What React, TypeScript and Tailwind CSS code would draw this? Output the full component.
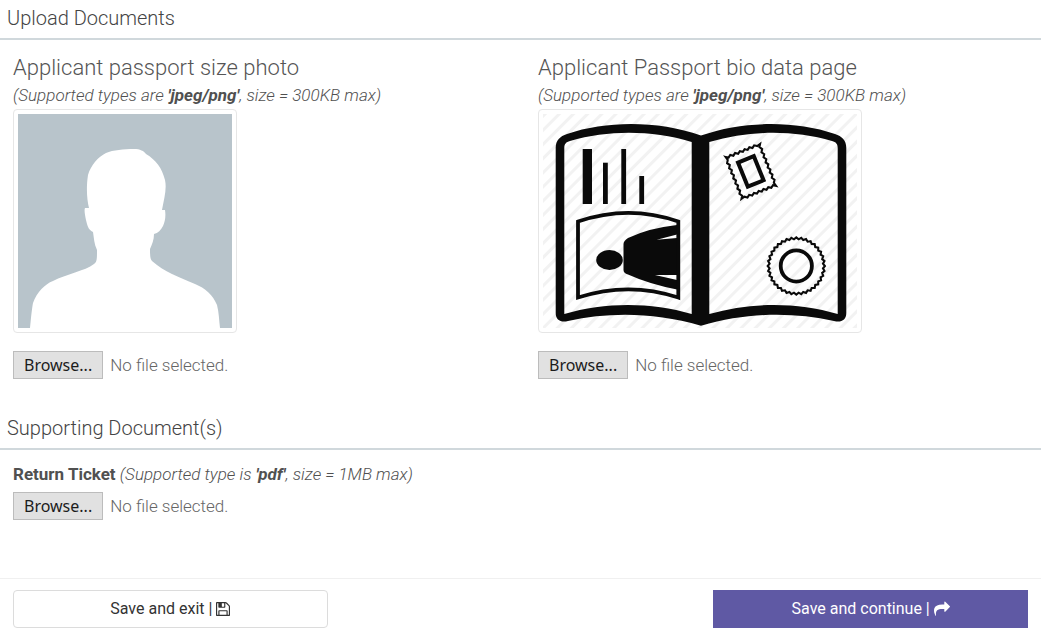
import React, { useRef, useState } from 'react';

type Point = [number, number];

// Perforated edge: walks between two points, swinging from side to side
const perforate = (from: Point, to: Point, teeth: number, depth: number): Point[] => {
  const dx = to[0] - from[0];
  const dy = to[1] - from[1];
  const len = Math.hypot(dx, dy);
  return Array.from({ length: teeth * 2 }, (_, i) => {
    const t = i / (teeth * 2);
    const side = i % 2 ? -depth : depth;
    return [from[0] + dx * t + (dy / len) * side, from[1] + dy * t - (dx / len) * side];
  });
};

const toPoints = (points: Point[]) => points.map(p => p.map(n => n.toFixed(2)).join(',')).join(' ');

const stampEdge = toPoints([
  ...perforate([-18, -22], [18, -22], 7, 0.9),
  ...perforate([18, -22], [18, 22], 8, 0.9),
  ...perforate([18, 22], [-18, 22], 7, 0.9),
  ...perforate([-18, 22], [-18, -22], 8, 0.9),
]);

const sealEdge = toPoints(
  Array.from({ length: 72 }, (_, i): Point => {
    const r = i % 2 ? 26.8 : 28.6;
    const a = (i / 72) * Math.PI * 2;
    return [Math.cos(a) * r, Math.sin(a) * r];
  })
);

const AvatarPlaceholder = () => (
  <svg viewBox="0 0 214 214" className="block w-[214px] h-[214px] bg-[#b8c4cb]" role="img" aria-label="Photo preview">
    <path
      fill="#fff"
      d="M12 214 C13 203 14 194 15 189 C19 178 27 170 35 167 C48 160 67 157 76 150 C79 148 79 145 79 136 C76 130 76 124 75 118 C70 116 69 110 68 106 C67 101 66 96 67 94 H71 C69 86 68 74 70 61 C73 51 80 43 88 39 C95 36 106 35 116 35 C122 35 126 37 128 40 C138 46 144 54 147 66 C149 75 146 85 144 96 H147 C148 102 147 108 145 112 C143 116 140 119 136 120 C136 126 134 130 132 135 C132 140 132 145 134 147 C146 158 161 163 177 170 C187 174 195 181 199 191 C201 199 201 206 202 214 Z"
    />
  </svg>
);

const PassportPlaceholder = () => (
  <svg viewBox="0 0 314 214" className="block w-[314px] h-[214px]" role="img" aria-label="Passport preview">
    <defs>
      <pattern id="stripes" width="10" height="10" patternUnits="userSpaceOnUse" patternTransform="rotate(45)">
        <rect width="3" height="10" fill="#f2f2f2" />
      </pattern>
    </defs>
    <rect width="314" height="214" fill="url(#stripes)" />
    <path
      fill="#0a0a0a"
      fillRule="evenodd"
      d="M12.7 34 C12.7 26 17 22.5 24 20 C64 6.5 115 6.5 158 21.5 C201 6.5 252 6.5 292 20 C299 22.5 303.3 26 303.3 34 V199 C303.3 206 298 209 291 207 C250 198 205 198 158 211.7 C111 198 66 198 25 207 C18 209 12.7 206 12.7 199 Z M21.3 34 C21.3 30 23 28 27 27 C66 16 108 16 148.7 28 V200 C108 188 62 188 21.3 200 Z M294.7 34 C294.7 30 293 28 289 27 C250 16 208 16 166.3 28 V200 C208 188 254 188 294.7 200 Z"
    />
    <g fill="#0a0a0a">
      <rect x="39.7" y="35" width="9.3" height="55" />
      <rect x="60" y="48.7" width="4.8" height="41.3" />
      <rect x="78.3" y="35" width="4.8" height="55" />
      <rect x="96.3" y="62" width="4.8" height="28" />
      <ellipse cx="66.5" cy="146" rx="13.3" ry="10" />
      <path d="M80.5 130 Q80.5 127 85 124 Q106 114 134 111 V120.5 L113.7 125.7 L134 124 V161 H112 L134 166 V175.5 Q106 170 85 160.5 Q80.5 159 80.5 156 Z" />
    </g>
    <path d="M35 107.5 C68 96.2 103 96.2 135.3 107.5 V183.5 C103 172.8 68 172.8 35 183.5 Z" fill="none" stroke="#0a0a0a" strokeWidth="3.8" />
    <g transform="translate(207.8 57.4) rotate(-22)" fill="none" stroke="#0a0a0a">
      <polygon points={stampEdge} strokeWidth="2.1" />
      <rect x="-8.5" y="-13" width="17" height="26" strokeWidth="4" />
    </g>
    <g transform="translate(253.3 152)" fill="none" stroke="#0a0a0a">
      <polygon points={sealEdge} strokeWidth="2.1" />
      <circle r="15.6" strokeWidth="3.8" />
    </g>
  </svg>
);

const SaveIcon = () => (
  <svg viewBox="128 128 1536 1536" className="w-3.5 h-3.5" fill="currentColor" aria-hidden="true">
    <path d="M512 1536h768v-384h-768v384zm896 0h128v-896q0-14-10-38.5t-20-34.5l-281-281q-10-10-34-20t-39-10v416q0 40-28 68t-68 28h-576q-40 0-68-28t-28-68v-416h-128v1280h128v-416q0-40 28-68t68-28h832q40 0 68 28t28 68v416zm-384-928v-320q0-13-9.5-22.5t-22.5-9.5h-192q-13 0-22.5 9.5t-9.5 22.5v320q0 13 9.5 22.5t22.5 9.5h192q13 0 22.5-9.5t9.5-22.5zm640 32v928q0 40-28 68t-68 28h-1344q-40 0-68-28t-28-68v-1344q0-40 28-68t68-28h928q40 0 88 20t76 48l280 280q28 28 48 76t20 88z" />
  </svg>
);

const ForwardIcon = () => (
  <svg viewBox="0 0 1792 1792" className="w-4 h-4" fill="currentColor" aria-hidden="true">
    <path d="M1792 640q0 26-19 45l-512 512q-19 19-45 19t-45-19-19-45v-256h-224q-98 0-175.5 6t-154 21.5-133 42.5-105.5 69.5-80 101-48.5 138.5-17.5 181q0 55 5 123 0 6 2.5 23.5t2.5 26.5q0 15-8.5 25t-23.5 10q-16 0-28-17-7-9-13-22t-13.5-30-10.5-24q-127-285-127-451 0-199 53-333 162-403 875-403h224v-256q0-26 19-45t45-19 45 19l512 512q19 19 19 45z" />
  </svg>
);

interface FilePickerProps {
  id: string;
  accept: string;
}

const FilePicker: React.FC<FilePickerProps> = ({ id, accept }) => {
  const inputRef = useRef<HTMLInputElement>(null);
  const [fileName, setFileName] = useState('');

  return (
    <div className="flex items-center gap-[7px]">
      <input
        ref={inputRef}
        id={id}
        type="file"
        accept={accept}
        className="hidden"
        onChange={(e) => setFileName(e.target.files?.[0]?.name ?? '')}
      />
      <button
        type="button"
        onClick={() => inputRef.current?.click()}
        className="h-7 px-2.5 border border-[#bcbcbc] bg-[#e1e1e1] font-['Noto_Sans',sans-serif] text-base leading-6 text-[#1c1c1c]"
      >
        Browse...
      </button>
      <span className="text-[17px] leading-7 font-light text-[#666]">{fileName || 'No file selected.'}</span>
    </div>
  );
};

const SectionTitle: React.FC<{ children: React.ReactNode }> = ({ children }) => (
  <h2 className="px-[7px] pt-1 pb-1.5 border-b-2 border-[#d0d8dc] text-xl leading-7 font-light text-[#444]">{children}</h2>
);

interface ImageUploadProps {
  id: string;
  title: string;
  children: React.ReactNode;
}

const ImageUpload: React.FC<ImageUploadProps> = ({ id, title, children }) => (
  <div className="flex flex-col items-start">
    <label htmlFor={id} className="text-[22px] leading-7 font-light text-[#555]">{title}</label>
    <p className="text-[17px] leading-[27px] font-light italic">
      (Supported types are <b className="font-bold">'jpeg/png'</b>, size = 300KB max)
    </p>
    <div className="p-1 mb-[18px] border border-[#e6e6e6] rounded-sm">{children}</div>
    <FilePicker id={id} accept="image/jpeg,image/png" />
  </div>
);

export default function App() {
  return (
    <div className="min-h-screen bg-white font-['Roboto',sans-serif] text-[#505050]">
      <form className="mr-[22px]" onSubmit={(e) => e.preventDefault()}>
        <SectionTitle>Upload Documents</SectionTitle>
        <div className="grid grid-cols-2 gap-[35px] px-[13px] pt-3.5 pb-[31px]">
          <ImageUpload id="photo" title="Applicant passport size photo">
            <AvatarPlaceholder />
          </ImageUpload>
          <ImageUpload id="passport" title="Applicant Passport bio data page">
            <PassportPlaceholder />
          </ImageUpload>
        </div>

        <SectionTitle>Supporting Document(s)</SectionTitle>
        <div className="px-[13px] pt-[11px] pb-[58px]">
          <label htmlFor="ticket" className="block mb-1 text-[17px] leading-[27px]">
            <b className="font-bold">Return Ticket</b>{' '}
            <span className="font-light italic">
              (Supported type is <b className="font-bold">'pdf'</b>, size = 1MB max)
            </span>
          </label>
          <FilePicker id="ticket" accept="application/pdf" />
        </div>

        <div className="flex justify-between px-[13px] pt-[11px] border-t border-[#f0f0f0]">
          <button
            type="submit"
            className="flex items-center justify-center gap-1 w-[31%] h-[38px] border border-[#dcdcdc] rounded-sm bg-white text-base text-[#333]"
          >
            Save and exit | <SaveIcon />
          </button>
          <button
            type="submit"
            className="flex items-center justify-center gap-1 w-[31%] h-[38px] bg-[#5f59a4] text-base text-white"
          >
            Save and continue | <ForwardIcon />
          </button>
        </div>
      </form>
    </div>
  );
}
